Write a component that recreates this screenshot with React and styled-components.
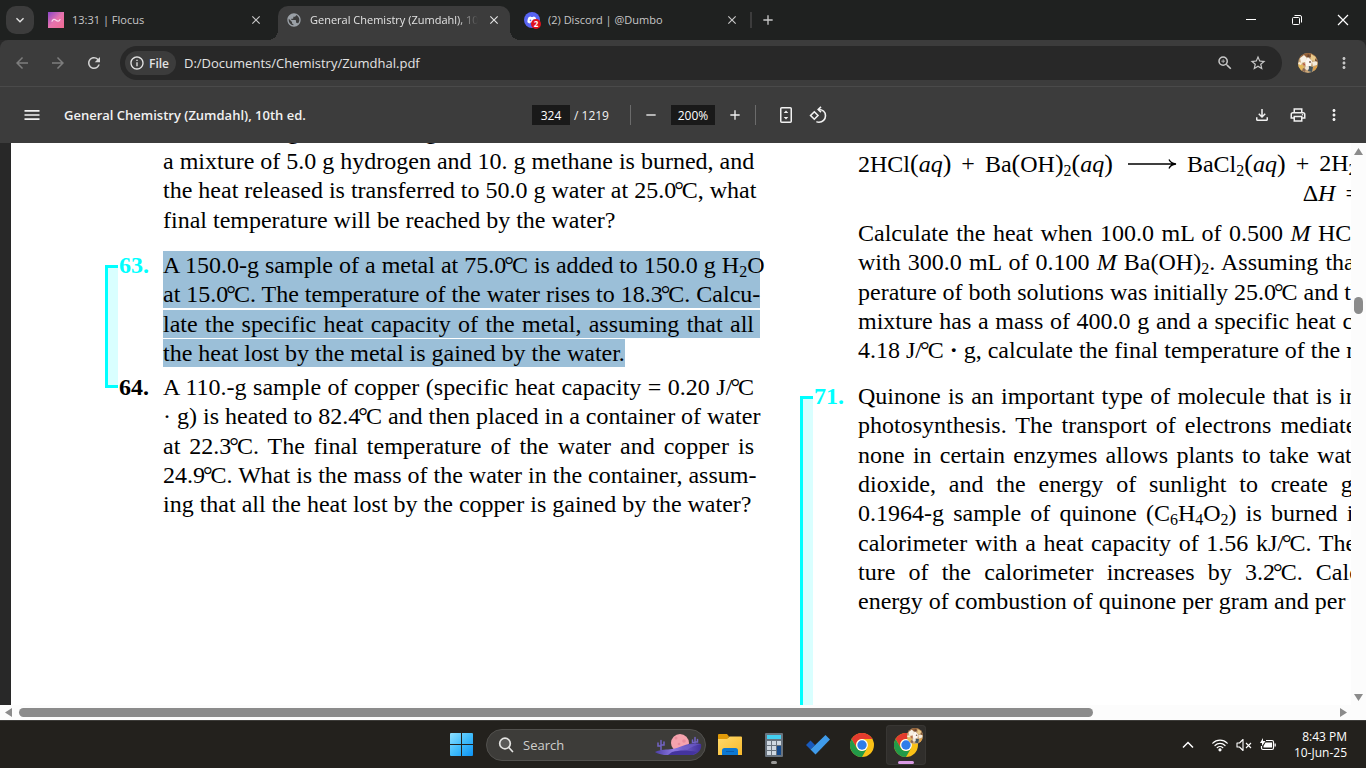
import React from 'react'
import styled, { createGlobalStyle, css } from 'styled-components'
import { FaDiscord } from 'react-icons/fa'
import {
  MdArrowBack,
  MdArrowForward,
  MdRefresh,
  MdInfoOutline,
  MdClose,
  MdExpandMore,
  MdAdd,
  MdRemove,
  MdMenu,
  MdMoreVert,
  MdPublic,
  MdOutlineFileDownload,
  MdOutlinePrint,
  MdStarOutline,
  MdZoomIn,
} from 'react-icons/md'

const GlobalStyle = createGlobalStyle`
  * {
    box-sizing: border-box;
  }
  body {
    margin: 0;
    background: #282828;
    font-family: "Open Sans", "Noto Sans", sans-serif;
    font-size: 12px;
    color: #e3e3e3;
    overflow: hidden;
  }
  button {
    font: inherit;
    color: inherit;
    background: transparent;
    border: 0;
    padding: 0;
  }
`

/* ---------- icons ---------- */

const Flocus = () => (
  <svg width="16" height="16" viewBox="0 0 16 16" aria-hidden="true">
    <defs>
      <linearGradient id="flocus" x1="0" y1="0" x2="1" y2="1">
        <stop offset="0" stopColor="#8a45c8" />
        <stop offset=".5" stopColor="#e673ae" />
        <stop offset="1" stopColor="#f06a90" />
      </linearGradient>
    </defs>
    <rect width="16" height="16" fill="url(#flocus)" />
    <path d="M4 9.300C5 7 6.500 7 8 8.300s3 1.300 4-.8" fill="none" stroke="#fbd7ea" strokeWidth="1.200" strokeLinecap="round" />
  </svg>
)

const Discord = () => (
  <DiscordMark>
    <FaDiscord size={10} />
    <b>2</b>
  </DiscordMark>
)

const FitPage = () => (
  <svg width="18" height="18" viewBox="0 0 18 18" fill="none" stroke="currentColor" aria-hidden="true">
    <rect x="3.750" y="1.750" width="10.500" height="14.500" rx="1" strokeWidth="1.500" />
    <path d="M9 4.500l2.300 2.500H6.700zM9 13.500l2.300-2.500H6.700z" fill="currentColor" stroke="none" />
  </svg>
)

const Rotate = () => (
  <svg width="18" height="18" viewBox="0 0 18 18" fill="none" stroke="currentColor" strokeWidth="1.600" aria-hidden="true">
    <path d="M5.300 5.800l3.700 3.700-3.700 3.700-3.700-3.700z" />
    <path d="M9.500 3.500c4 0 7 2.500 7 6.300 0 3.700-3 6.400-6.500 6.400-1 0-1.800-.2-2.600-.6" />
    <path d="M12 .8L9.200 3.500 12 6.200" />
  </svg>
)

const Restore = () => (
  <svg width="12" height="12" viewBox="0 0 12 12" fill="none" stroke="#fff" aria-hidden="true">
    <rect x="1.500" y="3.500" width="7" height="7" rx="1" />
    <path d="M3.500 1.500H9a1.500 1.500 0 0 1 1.500 1.500v5.500" />
  </svg>
)

const WinClose = () => (
  <svg width="12" height="12" viewBox="0 0 12 12" stroke="#fff" strokeWidth="1.200" aria-hidden="true">
    <path d="M1 1l10 10M11 1L1 11" />
  </svg>
)

const WinMin = () => (
  <svg width="12" height="12" viewBox="0 0 12 12" stroke="#fff" aria-hidden="true">
    <path d="M1 5.500h10" />
  </svg>
)

const Avatar = ({ size = 20 }) => (
  <svg width={size} height={size} viewBox="0 0 20 20" aria-hidden="true">
    <clipPath id="face">
      <circle cx="10" cy="10" r="10" />
    </clipPath>
    <g clipPath="url(#face)">
      <rect width="20" height="20" fill="#c9a678" />
      <path d="M0 0h20v5l-4 2-5-4-4 3-7-1z" fill="#946138" />
      <path d="M2 5l4-3 3 3-2 4-4 1z" fill="#f7f0e4" />
      <path d="M13 1l5 3-1 4-4-1z" fill="#e9c98a" />
      <path d="M10 1l2 2-1 3-2-2z" fill="#6b4630" />
      <path d="M7 8l3-4 4 4-1 5-5 1z" fill="#fbf5ef" />
      <path d="M14 9l5-1v4l-4 1z" fill="#f3eadb" />
      <path d="M17 6l3 1v2l-3-1z" fill="#7a5236" />
      <path d="M0 11l5 1 2 5-4 3-3-4z" fill="#e4b95c" />
      <path d="M1 9l3 1-1 2-3-1z" fill="#fbf0da" />
      <path d="M5 10l2 1-1 2z" fill="#b63c34" />
      <path d="M5 15l3 1-1 3-3-1z" fill="#8d6a55" />
      <path d="M11 13l4 1-1 5-4-1z" fill="#43545c" />
      <path d="M15 15l4-3v4l-3 3z" fill="#dd9e45" />
      <circle cx="12" cy="9" r="1" fill="#77584a" />
      <circle cx="9" cy="15" r="2" fill="#efe6da" />
    </g>
  </svg>
)

const Windows = () => (
  <svg width="24" height="24" viewBox="0 0 24 24" aria-hidden="true">
    <defs>
      <linearGradient id="win" x1="0" y1="0" x2="1" y2="1">
        <stop offset="0" stopColor="#8fe0ff" />
        <stop offset=".5" stopColor="#41bdfb" />
        <stop offset="1" stopColor="#0c93f5" />
      </linearGradient>
    </defs>
    <path d="M1 0h10v11H0V1a1 1 0 0 1 1-1zM12 0h10a1 1 0 0 1 1 1v10H12zM0 12h11v11H1a1 1 0 0 1-1-1zM12 12h11v10a1 1 0 0 1-1 1H12z" fill="url(#win)" />
  </svg>
)

const SearchGlass = () => (
  <svg width="16" height="16" viewBox="0 0 16 16" fill="none" stroke="#e4e4e2" strokeWidth="1.700" strokeLinecap="round" aria-hidden="true">
    <circle cx="7" cy="6.500" r="5.300" fill="#5a5a58" />
    <path d="M10.800 10.500L14.500 14.500" />
  </svg>
)

const Desert = () => (
  <svg width="50" height="24" viewBox="0 0 50 24" aria-hidden="true">
    <defs>
      <linearGradient id="dune" x1="0" y1="0" x2="1" y2="0">
        <stop offset="0" stopColor="#4c3fa6" />
        <stop offset=".4" stopColor="#8d78e4" />
        <stop offset="1" stopColor="#41309a" />
      </linearGradient>
    </defs>
    <circle cx="26" cy="10" r="9" fill="#f5a3ae" />
    <circle cx="22" cy="5" r="1.500" fill="#e98d9c" />
    <circle cx="30" cy="8" r="1.800" fill="#e98d9c" />
    <circle cx="25" cy="11" r="1.300" fill="#e98d9c" />
    <g fill="none" stroke="#7263c4" strokeWidth="1.500" strokeLinecap="round">
      <path d="M7 17V7.500M4 10v3h3M10 9v3H7" />
      <path d="M41 12V4.500M38.500 7v2.500H41M43.500 6.500V9H41" />
    </g>
    <path d="M1 19c6-3 12-2 17-3 9-1 17-8 29-5 1 5-2 9-8 11H10c-5-1-8-2-9-3z" fill="url(#dune)" />
    <path d="M18 19c8-2 15-2 25 0l-4 3H14z" fill="#44349f" />
    <path d="M28 15c6-4 12-5 19-4-5 1-10 3-14 6z" fill="#7565cf" opacity=".5" />
  </svg>
)

const Folder = () => (
  <svg width="24" height="24" viewBox="0 0 24 24" aria-hidden="true">
    <defs>
      <linearGradient id="folder" x1="0" y1="0" x2="1" y2="1">
        <stop offset="0" stopColor="#ffda6b" />
        <stop offset="1" stopColor="#f8b92c" />
      </linearGradient>
    </defs>
    <path d="M0 2a1 1 0 0 1 1-1h8l2 2.500L9 7H0z" fill="#e09a08" />
    <path d="M0 6h9l2.500-2.500H23a1 1 0 0 1 1 1V22H0z" fill="url(#folder)" />
    <path d="M4 22v-4.500A2.500 2.500 0 0 1 6.500 15h11a2.500 2.500 0 0 1 2.500 2.500V22z" fill="#0c78d2" />
    <path d="M8 18.500h8" stroke="#0a5cab" />
  </svg>
)

const Calculator = () => (
  <svg width="18" height="24" viewBox="0 0 18 24" aria-hidden="true">
    <rect width="18" height="24" rx="1" fill="#69737e" />
    <rect x="2" y="2" width="14" height="4" fill="#43d0f2" />
    <path d="M2 8h4v4H2zM7 8h4v4H7zM12 8h4v4h-4zM2 13h4v4H2zM7 13h4v4H7zM2 18h4v4H2zM7 18h4v4H7z" fill="#cfd8e1" />
    <path d="M12 13h4v9h-4z" fill="#13498c" />
  </svg>
)

const Todo = () => (
  <svg width="24" height="20" viewBox="0 0 24 20" aria-hidden="true">
    <path d="M4.500 5.500L0 10l4.500 4.500L9 10z" fill="#185abd" />
    <path d="M19.500 0L24 4.500 9.500 19.500 4.500 14.500z" fill="#3f9bea" />
  </svg>
)

const Chrome = () => (
  <svg width="24" height="24" viewBox="0 0 24 24" aria-hidden="true">
    <circle cx="12" cy="12" r="12" fill="#fbc116" />
    <path d="M1.600 6A12 12 0 0 1 22.400 6H12a6 6 0 0 0-5.200 9z" fill="#e33b2e" />
    <path d="M1.600 6l5.200 9a6 6 0 0 0 10.400 0L12 24A12 12 0 0 1 1.600 6z" fill="#229a48" />
    <circle cx="12" cy="12" r="5.900" fill="#fff" />
    <circle cx="12" cy="12" r="4.700" fill="#2f7de9" />
  </svg>
)

const ChevronUp = () => (
  <svg width="12" height="12" viewBox="0 0 12 12" fill="none" stroke="#fff" strokeWidth="1.500" aria-hidden="true">
    <path d="M1 8.500l5-5 5 5" />
  </svg>
)

const Wifi = () => (
  <svg width="16" height="14" viewBox="0 0 16 14" fill="none" stroke="#fff" strokeWidth="1.200" strokeLinecap="round" aria-hidden="true">
    <path d="M.8 5.200a10 10 0 0 1 14.400 0M3 7.500a7 7 0 0 1 10 0M5.200 9.700a4 4 0 0 1 5.600 0" />
    <circle cx="8" cy="11.800" r="1" fill="#fff" />
  </svg>
)

const Muted = () => (
  <svg width="16" height="14" viewBox="0 0 16 14" fill="none" stroke="#fff" strokeWidth="1.100" aria-hidden="true">
    <path d="M1 5h2.500L7 1.500v11L3.500 9H1z" strokeLinejoin="round" />
    <path d="M10 5l5 5M15 5l-5 5" />
  </svg>
)

const Battery = () => (
  <svg width="16" height="14" viewBox="0 0 16 14" aria-hidden="true">
    <path d="M6 2.500h6A1.500 1.500 0 0 1 13.500 4v6a1.500 1.500 0 0 1-1.500 1.500H3A1.500 1.500 0 0 1 1.500 10V8" fill="none" stroke="#fff" strokeWidth="1.200" />
    <path d="M5.500 4.500H12v5H3.500V8z" fill="#fff" />
    <path d="M14.500 5.500h1.300v3h-1.300z" fill="#fff" />
    <path d="M3 0L0 5h2v3l3.500-5H3z" fill="#fff" />
  </svg>
)

/* ---------- browser frame ---------- */

const Screen = styled.div`
  display: flex;
  flex-direction: column;
  height: 100vh;
`

const TabStrip = styled.header`
  display: flex;
  align-items: flex-end;
  height: 40px;
  flex-shrink: 0;
  padding-left: 6px;
  background: #1f2120;
`

const Tabs = styled.div`
  display: flex;
  align-items: flex-end;
  gap: 6px;
`

const TabSearch = styled.button`
  display: grid;
  place-items: center;
  width: 28px;
  height: 28px;
  margin-bottom: 6px;
  border-radius: 10px;
  background: #3c3c3c;
`

const Tab = styled.div`
  position: relative;
  display: flex;
  align-items: center;
  width: 232px;
  height: 34px;
  padding: 0 8px 6px;
  border-radius: 10px 10px 0 0;
  color: #c7c7c7;
  ${({ $active }) =>
    $active &&
    css`
      background: #3c3c3c;
      color: #e3e3e3;
      &::before,
      &::after {
        content: '';
        position: absolute;
        bottom: 0;
        width: 10px;
        height: 10px;
      }
      &::before {
        right: 100%;
        background: radial-gradient(circle at 0 0, #1f2120 10px, #3c3c3c 10px);
      }
      &::after {
        left: 100%;
        background: radial-gradient(circle at 100% 0, #1f2120 10px, #3c3c3c 10px);
      }
    `}
`

const TabTitle = styled.span`
  flex: 1;
  min-width: 0;
  margin: 0 8px;
  overflow: hidden;
  white-space: nowrap;
  font-size: 11px;
  line-height: 16px;
  ${({ $fade }) => $fade && css`
    mask-image: linear-gradient(to right, #000 88%, transparent);
  `}
`

const TabButton = styled.button`
  display: grid;
  place-items: center;
  width: 16px;
  height: 16px;
`

const DiscordMark = styled.span`
  position: relative;
  display: grid;
  place-items: center;
  width: 16px;
  height: 16px;
  border-radius: 50%;
  background: #5865f2;
  color: #fff;
  b {
    position: absolute;
    right: -1px;
    bottom: -1px;
    width: 10px;
    height: 10px;
    border-radius: 50%;
    background: #e0101c;
    font-size: 8px;
    line-height: 10px;
    text-align: center;
  }
`

const NewTab = styled.div`
  display: flex;
  align-items: center;
  gap: 8px;
  height: 28px;
  margin: 0 auto 6px 2px;
  color: #c7c7c7;
  &::before {
    content: '';
    width: 2px;
    height: 16px;
    background: #3c3c3c;
  }
`

const WindowButtons = styled.div`
  display: flex;
  height: 40px;
  button {
    display: grid;
    place-items: center;
    width: 46px;
  }
`

const AddressRow = styled.nav`
  display: flex;
  align-items: center;
  height: 47px;
  flex-shrink: 0;
  padding: 0 13px 0 12px;
  background: #3c3c3c;
  border-bottom: 1px solid #4a4a4a;
  border-radius: 8px 8px 0 0;
`

const NavButton = styled.button`
  display: grid;
  place-items: center;
  width: 20px;
  height: 28px;
  margin-right: 16px;
  color: ${({ $dim }) => ($dim ? '#7d7d7d' : '#d2d2d2')};
`

const AddressBar = styled.div`
  display: flex;
  flex: 1;
  align-items: center;
  height: 34px;
  padding: 0 15px 0 5px;
  border-radius: 17px;
  background: #282828;
`

const FileChip = styled.button`
  display: flex;
  align-items: center;
  gap: 4px;
  height: 24px;
  padding: 0 7px 0 4px;
  border-radius: 12px;
  background: #3c3c3c;
  font-weight: 600;
`

const Url = styled.input`
  flex: 1;
  min-width: 0;
  padding: 0 8px;
  border: 0;
  outline: 0;
  background: transparent;
  color: #e3e3e3;
  font: inherit;
  font-size: 13px;
`

const BarIcons = styled.div`
  display: flex;
  align-items: center;
  gap: 15px;
  color: #c7c7c7;
  button {
    display: grid;
    place-items: center;
  }
`

const Profile = styled.div`
  display: flex;
  align-items: center;
  gap: 17px;
  margin-left: 16px;
  color: #c7c7c7;
  button {
    display: grid;
    place-items: center;
  }
`

/* ---------- pdf viewer ---------- */

const PdfToolbar = styled.div`
  display: grid;
  grid-template-columns: 1fr auto 1fr;
  align-items: center;
  height: 56px;
  flex-shrink: 0;
  padding: 0 23px 0 16px;
  background: #3c3c3c;
  color: #f1f1f1;
`

const ToolGroup = styled.div`
  display: flex;
  align-items: center;
  gap: ${({ $gap }) => $gap}px;
  justify-content: ${({ $end }) => ($end ? 'flex-end' : 'flex-start')};
`

const ToolButton = styled.button`
  display: grid;
  place-items: center;
  min-width: ${({ $wide }) => ($wide ? 32 : 16)}px;
`

const DocTitle = styled.h1`
  margin: 0;
  font-size: 13px;
  font-weight: 600;
  white-space: nowrap;
`

const NumberBox = styled.input`
  width: ${({ $w }) => $w}px;
  height: 20px;
  padding: 0;
  border: 0;
  background: #191919;
  color: #fff;
  font: inherit;
  text-align: center;
`

const Rule = styled.span`
  width: 1px;
  height: 20px;
  background: #6b6b6b;
`

const Viewer = styled.main`
  display: grid;
  grid-template-columns: 1fr 15px;
  grid-template-rows: 1fr 15px;
  flex: 1;
  min-height: 0;
  background: #fcfcfc;
`

const Canvas = styled.div`
  display: flex;
  min-width: 0;
  overflow: hidden;
  padding-left: 11px;
  background: #282828;
`

const Page = styled.article`
  display: flex;
  flex: none;
  gap: 46px;
  width: 1632px;
  padding-left: 94px;
  background: #fff;
  color: #000;
  font-family: "Liberation Serif", serif;
  font-size: 24px;
  line-height: 29px;
`

const Column = styled.div`
  width: 649px;
`

const Problem = styled.section`
  display: grid;
  grid-template-columns: 14px 44px 591px;
  margin-top: ${({ $top }) => $top || 0}px;
`

const Bracket = styled.span`
  border: solid #00ffff;
  border-width: 3px 0 ${({ $open }) => ($open ? 0 : 3)}px 3px;
  background: #d9ffff;
  margin: 14px 1px ${({ $open }) => ($open ? -120 : -20)}px 0;
`

const Num = styled.b`
  grid-column: 2;
  color: ${({ $cyan }) => ($cyan ? '#00ffff' : '#000')};
`

const Body = styled.div`
  grid-column: 3;
`

const Line = styled.div`
  height: 29px;
  text-align-last: ${({ $last }) => ($last ? 'left' : 'justify')};
  white-space: nowrap;
  &:nth-child(3n + 2) {
    height: 30px;
  }
  mark {
    display: ${({ $last }) => ($last ? 'inline-block' : 'block')};
    height: 28px;
    margin-right: ${({ $last }) => ($last ? 0 : -6)}px;
    padding-right: ${({ $last }) => ($last ? 0 : 6)}px;
    background: #9bbfd8;
    color: #000;
  }
  &:first-child mark {
    height: 29px;
  }
  sub {
    font-size: 16px;
    line-height: 0;
    vertical-align: -4px;
  }
`

/* the degree ring sits tight between its number and the C */
const Degree = styled.span`
  margin: 0 -2px;
`

const Equation = styled(Line)`
  display: flex;
  align-items: center;
  gap: 10px;
  text-align-last: left;
  justify-content: ${({ $end }) => ($end ? 'flex-end' : 'flex-start')};
  svg {
    flex: none;
    margin-left: 4px;
  }
`

const Paren = styled.span`
  font-size: 26px;
`

/* tail of the line that is scrolled out above the page */
const CutLine = styled.div`
  display: flex;
  gap: 126px;
  height: 29px;
  padding-left: 124px;
`

const VScroll = styled.div`
  display: flex;
  flex-direction: column;
  align-items: center;
  padding: 5px 0 3px;
`

const HScroll = styled.div`
  display: flex;
  align-items: center;
  padding: 0 4px 0 5px;
`

const Thumb = styled.span`
  flex: ${({ $grow }) => $grow || 'none'};
  width: ${({ $w }) => $w}px;
  height: ${({ $h }) => $h}px;
  border-radius: 5px;
  background: #8b8b8b;
`

const Track = styled.span`
  flex: ${({ $grow }) => $grow};
`

/* ---------- taskbar ---------- */

const Taskbar = styled.footer`
  display: grid;
  grid-template-columns: 1fr auto 1fr;
  align-items: center;
  height: 48px;
  flex-shrink: 0;
  padding: 0 19px 0 21px;
  border-top: 1px solid #3d3c39;
  background: #23211d;
  color: #fff;
`

const Apps = styled.div`
  grid-column: 2;
  display: flex;
  align-items: center;
  gap: 4px;
`

const AppButton = styled.button`
  position: relative;
  display: grid;
  place-items: center;
  width: 40px;
  height: 40px;
  border-radius: 4px;
  ${({ $open }) =>
    $open &&
    css`
      background: #302e2b;
      box-shadow: inset 0 0 0 1px #383633;
    `}
  ${({ $bar, $open }) =>
    $bar &&
    css`
      &::after {
        content: '';
        position: absolute;
        bottom: 1px;
        width: ${$open ? 16 : 6}px;
        height: 3px;
        border-radius: 2px;
        background: ${$bar};
      }
    `}
`

const AppBadge = styled.span`
  position: absolute;
  top: 3px;
  right: 3px;
  line-height: 0;
`

const SearchBox = styled.label`
  display: flex;
  align-items: center;
  width: 220px;
  height: 32px;
  padding: 0 1px 0 11px;
  border: 1px solid #52514e;
  border-radius: 16px;
  background: #3d3c39;
  input {
    flex: 1;
    min-width: 0;
    margin-left: 9px;
    padding: 0;
    border: 0;
    background: transparent;
    font: inherit;
    font-size: 13px;
  }
  input::placeholder {
    color: #cfcfcd;
    opacity: 1;
  }
`

const Tray = styled.div`
  display: flex;
  align-items: center;
  justify-content: flex-end;
  gap: 8px;
`

const TrayButton = styled.button`
  display: grid;
  margin-right: 10px;
`

const Clock = styled.time`
  margin-left: 10px;
  line-height: 16px;
  text-align: right;
`

const deg = <Degree>°</Degree>

const upper = [
  'a mixture of 5.0 g hydrogen and 10. g methane is burned, and',
  <>the heat released is transferred to 50.0 g water at 25.0{deg}C, what</>,
  'final temperature will be reached by the water?',
]

const metal = [
  <>A 150.0-g sample of a metal at 75.0{deg}C is added to 150.0 g H<sub>2</sub>O</>,
  <>at 15.0{deg}C. The temperature of the water rises to 18.3{deg}C. Calcu-</>,
  'late the specific heat capacity of the metal, assuming that all',
  'the heat lost by the metal is gained by the water.',
]

const copper = [
  <>A 110.-g sample of copper (specific heat capacity = 0.20 J/{deg}C</>,
  <>· g) is heated to 82.4{deg}C and then placed in a container of water</>,
  <>at 22.3{deg}C. The final temperature of the water and copper is</>,
  <>24.9{deg}C. What is the mass of the water in the container, assum-</>,
  'ing that all the heat lost by the copper is gained by the water?',
]

const reaction = [
  <>Calculate the heat when 100.0 mL of 0.500 <i>M</i> HCl is mixed</>,
  <>with 300.0 mL of 0.100 <i>M</i> Ba(OH)<sub>2</sub>. Assuming that the tem-</>,
  <>perature of both solutions was initially 25.0{deg}C and that the final</>,
  'mixture has a mass of 400.0 g and a specific heat capacity of',
  <>4.18 J/{deg}C <b>·</b> g, calculate the final temperature of the mixture.</>,
]

const quinone = [
  'Quinone is an important type of molecule that is involved in',
  'photosynthesis. The transport of electrons mediated by qui-',
  'none in certain enzymes allows plants to take water, carbon',
  'dioxide, and the energy of sunlight to create glucose. A',
  <>0.1964-g sample of quinone (C<sub>6</sub>H<sub>4</sub>O<sub>2</sub>) is burned in a bomb</>,
  <>calorimeter with a heat capacity of 1.56 kJ/{deg}C. The tempera-</>,
  <>ture of the calorimeter increases by 3.2{deg}C. Calculate the</>,
  'energy of combustion of quinone per gram and per mole.',
]

const Lines = ({ items, marked }) => (
  <Body>
    {items.map((item, i) => (
      <Line key={i} $last={i === items.length - 1}>
        {marked ? <mark>{item}</mark> : item}
      </Line>
    ))}
  </Body>
)

const Aqueous = () => (
  <>
    <Paren>(</Paren><i>aq</i><Paren>)</Paren>
  </>
)

const App = () => {
  return (
    <Screen>
      <GlobalStyle />
      <TabStrip>
        <Tabs>
          <TabSearch aria-label="Search tabs"><MdExpandMore size={16} /></TabSearch>
          <Tab>
            <Flocus />
            <TabTitle>13:31 | Flocus</TabTitle>
            <TabButton aria-label="Close tab"><MdClose size={14} /></TabButton>
          </Tab>
          <Tab $active>
            <MdPublic size={16} color="#9aa0a6" />
            <TabTitle $fade>General Chemistry (Zumdahl), 10th ed.</TabTitle>
            <TabButton aria-label="Close tab"><MdClose size={14} /></TabButton>
          </Tab>
          <Tab>
            <Discord />
            <TabTitle>(2) Discord | @Dumbo</TabTitle>
            <TabButton aria-label="Close tab"><MdClose size={14} /></TabButton>
          </Tab>
        </Tabs>
        <NewTab>
          <TabButton aria-label="New tab"><MdAdd size={16} /></TabButton>
        </NewTab>
        <WindowButtons>
          <button aria-label="Minimize"><WinMin /></button>
          <button aria-label="Restore"><Restore /></button>
          <button aria-label="Close"><WinClose /></button>
        </WindowButtons>
      </TabStrip>

      <AddressRow>
        <NavButton $dim aria-label="Back"><MdArrowBack size={18} /></NavButton>
        <NavButton $dim aria-label="Forward"><MdArrowForward size={18} /></NavButton>
        <NavButton aria-label="Reload"><MdRefresh size={18} /></NavButton>
        <AddressBar>
          <FileChip><MdInfoOutline size={16} />File</FileChip>
          <Url aria-label="Address" defaultValue="D:/Documents/Chemistry/Zumdhal.pdf" />
          <BarIcons>
            <button aria-label="Zoom"><MdZoomIn size={18} /></button>
            <button aria-label="Bookmark"><MdStarOutline size={18} /></button>
          </BarIcons>
        </AddressBar>
        <Profile>
          <button aria-label="Profile"><Avatar /></button>
          <button aria-label="Menu"><MdMoreVert size={18} /></button>
        </Profile>
      </AddressRow>

      <PdfToolbar>
        <ToolGroup $gap={16}>
          <ToolButton $wide aria-label="Sidebar"><MdMenu size={20} /></ToolButton>
          <DocTitle>General Chemistry (Zumdahl), 10th ed.</DocTitle>
        </ToolGroup>
        <ToolGroup $gap={21}>
          <ToolGroup $gap={4}>
            <NumberBox $w={38} aria-label="Page number" defaultValue="324" />
            <span>/ 1219</span>
          </ToolGroup>
          <ToolGroup $gap={12}>
            <Rule />
            <ToolButton aria-label="Zoom out"><MdRemove size={16} /></ToolButton>
            <NumberBox $w={44} aria-label="Zoom level" defaultValue="200%" />
            <ToolButton aria-label="Zoom in"><MdAdd size={16} /></ToolButton>
            <Rule />
          </ToolGroup>
          <ToolGroup $gap={14}>
            <ToolButton aria-label="Fit to page"><FitPage /></ToolButton>
            <ToolButton aria-label="Rotate"><Rotate /></ToolButton>
          </ToolGroup>
        </ToolGroup>
        <ToolGroup $gap={18} $end>
          <ToolButton aria-label="Download"><MdOutlineFileDownload size={18} /></ToolButton>
          <ToolButton aria-label="Print"><MdOutlinePrint size={18} /></ToolButton>
          <ToolButton aria-label="More"><MdMoreVert size={18} /></ToolButton>
        </ToolGroup>
      </PdfToolbar>

      <Viewer>
        <Canvas>
          <Page>
            <Column>
              <Problem $top={-26}>
                <Body>
                  <CutLine aria-hidden="true">
                    <span>g</span>
                    <span>g</span>
                  </CutLine>
                </Body>
              </Problem>
              <Problem $top={1}>
                <Lines items={upper} />
              </Problem>
              <Problem $top={16}>
                <Bracket />
                <Num $cyan>63.</Num>
                <Lines items={metal} marked />
              </Problem>
              <Problem $top={5}>
                <Num>64.</Num>
                <Lines items={copper} />
              </Problem>
            </Column>
            <Column>
              <Problem $top={6}>
                <Body>
                  <Equation>
                    <span>2HCl<Aqueous /></span>
                    <span>+</span>
                    <span>Ba<Paren>(</Paren>OH<Paren>)</Paren><sub>2</sub><Aqueous /></span>
                    <svg width="50" height="12" viewBox="0 0 50 12" fill="none" stroke="#000" strokeWidth="1.300" aria-hidden="true">
                      <path d="M1 6h47M42 1.500c1 2.500 3 4 7 4.500-4 .5-6 2-7 4.500" />
                    </svg>
                    <span>BaCl<sub>2</sub><Aqueous /></span>
                    <span>+</span>
                    <span>2H<sub>2</sub>O(<i>l</i>)</span>
                  </Equation>
                  <Equation $end>
                    <span>Δ<i>H</i></span>
                    <span>=</span>
                    <span>−118</span>
                    <span>kJ</span>
                  </Equation>
                </Body>
              </Problem>
              <Problem $top={11}>
                <Lines items={reaction} />
              </Problem>
              <Problem $top={16}>
                <Bracket $open />
                <Num $cyan>71.</Num>
                <Lines items={quinone} />
              </Problem>
            </Column>
          </Page>
        </Canvas>
        <VScroll>
          <svg width="9" height="8" viewBox="0 0 9 8" aria-hidden="true"><path d="M4.500 0L9 7H0z" fill="#8b8b8b" /></svg>
          <Track $grow={140} />
          <Thumb $w={9} $h={17} />
          <Track $grow={379} />
          <svg width="9" height="8" viewBox="0 0 9 8" aria-hidden="true"><path d="M4.500 7L9 0H0z" fill="#8b8b8b" /></svg>
        </VScroll>
        <HScroll>
          <svg width="8" height="9" viewBox="0 0 8 9" aria-hidden="true"><path d="M0 4.500L7 0v9z" fill="#8b8b8b" /></svg>
          <Track $grow={6} />
          <Thumb $grow={1074} $h={9} />
          <Track $grow={246} />
          <svg width="8" height="9" viewBox="0 0 8 9" aria-hidden="true"><path d="M8 4.500L1 0v9z" fill="#8b8b8b" /></svg>
        </HScroll>
      </Viewer>

      <Taskbar>
        <Apps>
          <AppButton aria-label="Start"><Windows /></AppButton>
          <SearchBox>
            <SearchGlass />
            <input aria-label="Search" placeholder="Search" />
            <Desert />
          </SearchBox>
          <AppButton aria-label="File Explorer"><Folder /></AppButton>
          <AppButton aria-label="Calculator" $bar="#9a9997"><Calculator /></AppButton>
          <AppButton aria-label="To Do"><Todo /></AppButton>
          <AppButton aria-label="Chrome"><Chrome /></AppButton>
          <AppButton aria-label="Chrome profile" $open $bar="#d99ae4">
            <Chrome />
            <AppBadge><Avatar size={16} /></AppBadge>
          </AppButton>
        </Apps>
        <Tray>
          <TrayButton aria-label="Hidden icons"><ChevronUp /></TrayButton>
          <Wifi />
          <Muted />
          <Battery />
          <Clock>8:43 PM<br />10-Jun-25</Clock>
        </Tray>
      </Taskbar>
    </Screen>
  )
}

export default App
